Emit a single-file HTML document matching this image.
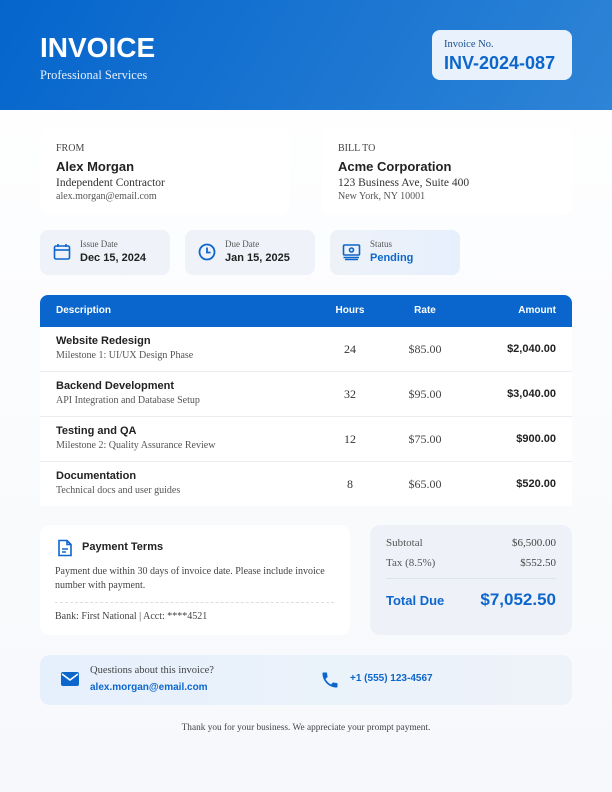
<!DOCTYPE html>
<html><head><meta charset="utf-8"><style>
*{margin:0;padding:0;box-sizing:border-box}
body{width:612px;height:792px;background:linear-gradient(#fff,#f6f8fb);font-family:"Liberation Serif",serif;color:#333;position:relative;overflow:hidden}
.sans{font-family:"Liberation Sans",sans-serif}
.abs{position:absolute}
.hdr{left:0;top:0;width:612px;height:110px;background:linear-gradient(120deg,#0565cc,#2e84d6)}
.card{background:#fff;border-radius:10px}
.pill{background:#eff3f9;border-radius:8px;height:45px;top:230px;width:130px}
.lbl{font-size:9px;color:#555}
.val{font-size:11px;font-weight:bold;font-family:"Liberation Sans",sans-serif;color:#222}
.row{left:40px;width:532px;height:45px;background:#fff;border-bottom:1px solid #ececf0}
.row .t{position:absolute;left:16px;top:8px;font:bold 11px "Liberation Sans",sans-serif;color:#222}
.row .s{position:absolute;left:16px;top:23px;font-size:10px;color:#555}
.row .h{position:absolute;left:290px;width:40px;text-align:center;top:15px;font-size:12px}
.row .r{position:absolute;left:360px;width:50px;text-align:center;top:15px;font-size:12px;color:#444}
.row .a{position:absolute;right:16px;top:16px;font:bold 11px "Liberation Sans",sans-serif;color:#222}
</style></head><body>
<div class="abs hdr"></div>
<div class="abs sans" style="left:40px;top:32px;font-size:28px;font-weight:bold;color:#fff">INVOICE</div>
<div class="abs" style="left:40px;top:68px;font-size:12.5px;color:#e8f0fb">Professional Services</div>
<div class="abs" style="left:432px;top:30px;width:140px;height:50px;background:#e8f1fc;border-radius:8px"></div>
<div class="abs" style="left:444px;top:39px;font-size:10.5px;color:#1a4f8f">Invoice No.</div>
<div class="abs sans" style="left:444px;top:53px;font-size:18px;font-weight:bold;color:#0d66cc">INV-2024-087</div>

<div class="abs card" style="left:40px;top:127px;width:250px;height:88px"></div>
<div class="abs card" style="left:322px;top:127px;width:250px;height:88px"></div>
<div class="abs" style="left:56px;top:143px;font-size:10px;color:#444">FROM</div>
<div class="abs sans" style="left:56px;top:159px;font-size:13px;font-weight:bold;color:#222">Alex Morgan</div>
<div class="abs" style="left:56px;top:177px;font-size:11.5px;color:#333">Independent Contractor</div>
<div class="abs" style="left:56px;top:191px;font-size:10px;color:#555">alex.morgan@email.com</div>
<div class="abs" style="left:338px;top:143px;font-size:10px;color:#444">BILL TO</div>
<div class="abs sans" style="left:338px;top:159px;font-size:13px;font-weight:bold;color:#222">Acme Corporation</div>
<div class="abs" style="left:338px;top:177px;font-size:11.5px;color:#333">123 Business Ave, Suite 400</div>
<div class="abs" style="left:338px;top:191px;font-size:10px;color:#555">New York, NY 10001</div>

<div class="abs pill" style="left:40px"></div>
<div class="abs pill" style="left:185px"></div>
<div class="abs pill" style="left:330px;background:linear-gradient(90deg,#eef2f8,#e6f0fd)"></div>
<svg class="abs" style="left:53px;top:243px" width="18" height="18" viewBox="0 0 18 18" fill="none" stroke="#0d66cc" stroke-width="1.6"><rect x="1.5" y="3" width="15" height="13" rx="1.5"/><line x1="1.5" y1="7" x2="16.5" y2="7"/><line x1="5" y1="1" x2="5" y2="4"/><line x1="13" y1="1" x2="13" y2="4"/></svg>
<svg class="abs" style="left:197px;top:242px" width="20" height="20" viewBox="0 0 20 20" fill="none" stroke="#0d66cc" stroke-width="1.8"><circle cx="10" cy="10" r="7.5"/><path d="M10 5.5V10.5H13.5"/></svg>
<svg class="abs" style="left:342px;top:243px" width="20" height="18" viewBox="0 0 20 18" fill="none" stroke="#0d66cc" stroke-width="1.6"><rect x="1.5" y="2" width="16" height="10" rx="1"/><circle cx="9.5" cy="7" r="2"/><path d="M1.5 14.5H17M3 16.5H16"/></svg>
<div class="abs lbl" style="left:80px;top:239px">Issue Date</div>
<div class="abs val" style="left:80px;top:252px">Dec 15, 2024</div>
<div class="abs lbl" style="left:225px;top:239px">Due Date</div>
<div class="abs val" style="left:225px;top:252px">Jan 15, 2025</div>
<div class="abs lbl" style="left:370px;top:239px">Status</div>
<div class="abs val" style="left:370px;top:252px;color:#0d66cc">Pending</div>

<div class="abs sans" style="left:40px;top:295px;width:532px;height:32px;background:#0a66cc;border-radius:8px 8px 0 0;color:#fff;font-size:10px;font-weight:bold">
<span class="abs" style="left:16px;top:10px">Description</span>
<span class="abs" style="left:290px;width:40px;text-align:center;top:10px">Hours</span>
<span class="abs" style="left:360px;width:50px;text-align:center;top:10px">Rate</span>
<span class="abs" style="right:16px;top:10px">Amount</span></div>
<div class="abs row" style="top:327px"><div class="t">Website Redesign</div><div class="s">Milestone 1: UI/UX Design Phase</div><div class="h">24</div><div class="r">$85.00</div><div class="a">$2,040.00</div></div>
<div class="abs row" style="top:372px"><div class="t">Backend Development</div><div class="s">API Integration and Database Setup</div><div class="h">32</div><div class="r">$95.00</div><div class="a">$3,040.00</div></div>
<div class="abs row" style="top:417px"><div class="t">Testing and QA</div><div class="s">Milestone 2: Quality Assurance Review</div><div class="h">12</div><div class="r">$75.00</div><div class="a">$900.00</div></div>
<div class="abs row" style="top:462px;border:none;height:44px"><div class="t">Documentation</div><div class="s">Technical docs and user guides</div><div class="h">8</div><div class="r">$65.00</div><div class="a">$520.00</div></div>

<div class="abs card" style="left:40px;top:525px;width:310px;height:110px"></div>
<svg class="abs" style="left:57px;top:539px" width="16" height="18" viewBox="0 0 16 18" fill="none" stroke="#0d66cc" stroke-width="1.6"><path d="M2 1.5H10L14 5.5V16.5H2Z"/><path d="M10 1.5V5.5H14M5 10H11M5 13H9"/></svg>
<div class="abs sans" style="left:82px;top:541px;font-size:11px;font-weight:bold;color:#222">Payment Terms</div>
<div class="abs" style="left:55px;top:565px;width:285px;font-size:10px;line-height:14px;color:#444">Payment due within 30 days of invoice date. Please include invoice number with payment.</div>
<div class="abs" style="left:55px;top:602px;width:279px;border-top:1px dashed #ddd"></div>
<div class="abs" style="left:55px;top:611px;font-size:10px;color:#444">Bank: First National | Acct: ****4521</div>

<div class="abs" style="left:370px;top:525px;width:202px;height:110px;background:#eef2f8;border-radius:10px"></div>
<div class="abs" style="left:386px;top:537px;font-size:11px;color:#555">Subtotal</div>
<div class="abs" style="right:56px;top:537px;font-size:11px;color:#444">$6,500.00</div>
<div class="abs" style="left:386px;top:557px;font-size:11px;color:#555">Tax (8.5%)</div>
<div class="abs" style="right:56px;top:557px;font-size:11px;color:#444">$552.50</div>
<div class="abs" style="left:386px;top:578px;width:170px;border-top:1px solid #dde3ec"></div>
<div class="abs sans" style="left:386px;top:593px;font-size:13px;font-weight:bold;color:#0d66cc">Total Due</div>
<div class="abs sans" style="right:56px;top:590px;font-size:17px;font-weight:bold;color:#0d66cc">$7,052.50</div>

<div class="abs" style="left:40px;top:655px;width:532px;height:50px;background:linear-gradient(90deg,#e6f0fc,#eef3f9);border-radius:10px"></div>
<svg class="abs" style="left:61px;top:672px" width="18" height="14" viewBox="0 0 18 14"><rect x="0" y="0" width="18" height="14" rx="2" fill="#0d66cc"/><path d="M1 2L9 8L17 2" fill="none" stroke="#fff" stroke-width="1.5"/></svg>
<div class="abs" style="left:90px;top:665px;font-size:10.5px;color:#444">Questions about this invoice?</div>
<div class="abs sans" style="left:90px;top:682px;font-size:10px;font-weight:bold;color:#0d66cc">alex.morgan@email.com</div>
<svg class="abs" style="left:320px;top:670px" width="20" height="20" viewBox="0 0 24 24"><path fill="#0d66cc" d="M6.6 10.8c1.4 2.8 3.8 5.1 6.6 6.6l2.2-2.2c.3-.3.7-.4 1-.2 1.1.4 2.3.6 3.6.6.6 0 1 .4 1 1V20c0 .6-.4 1-1 1C10.6 21 3 13.4 3 4c0-.6.4-1 1-1h3.5c.6 0 1 .4 1 1 0 1.3.2 2.5.6 3.6.1.3 0 .7-.2 1z"/></svg>
<div class="abs sans" style="left:350px;top:673px;font-size:10px;font-weight:bold;color:#0d66cc">+1 (555) 123-4567</div>
<div class="abs" style="left:0;width:612px;text-align:center;top:723px;font-size:9.3px;color:#444">Thank you for your business. We appreciate your prompt payment.</div>
</body></html>
